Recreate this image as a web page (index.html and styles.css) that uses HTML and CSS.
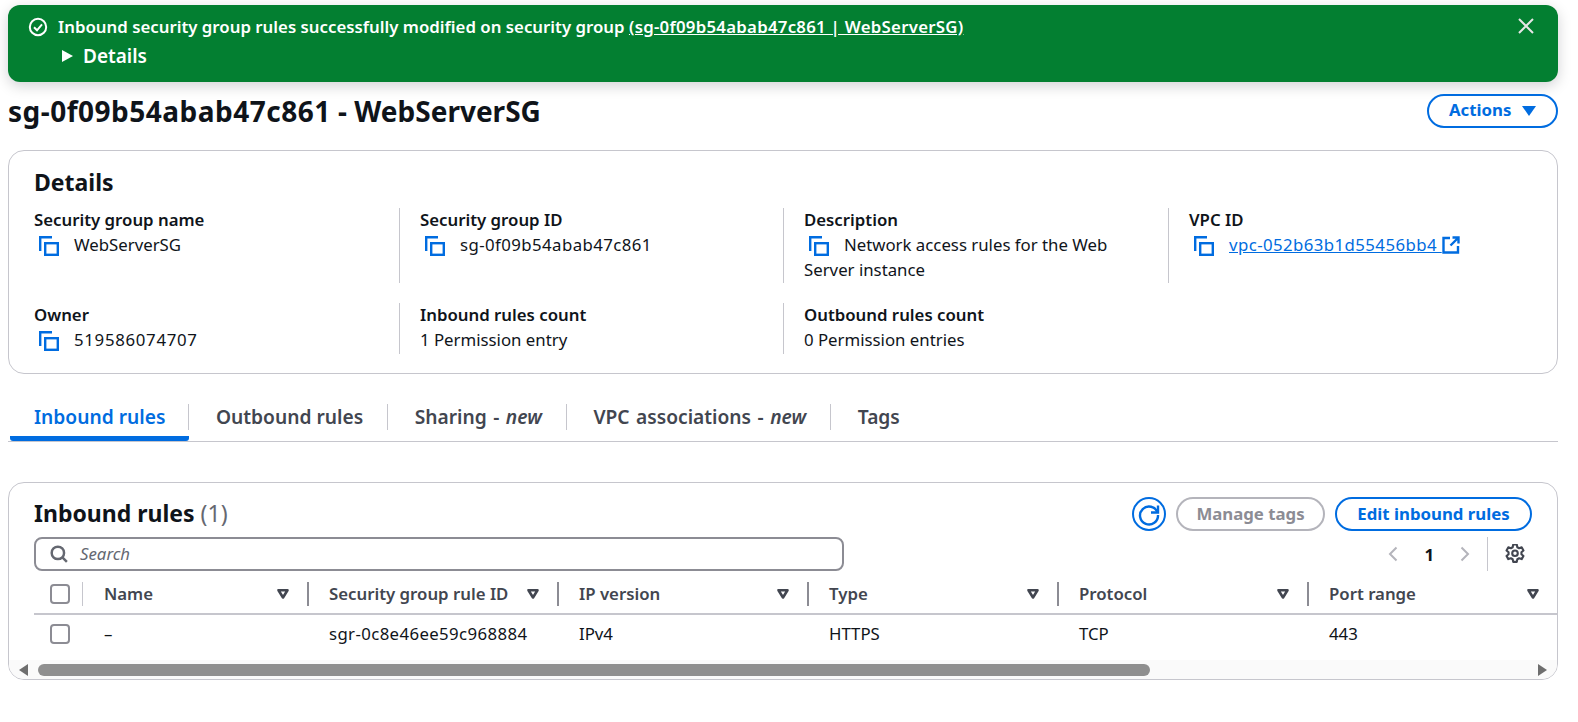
FILE: index.html
```html
<!DOCTYPE html>
<html>
<head>
    <meta charset="utf-8">
    <title>sg-0f09b54abab47c861 - WebServerSG</title>
    <link rel="stylesheet" href="styles.css">
</head>
<body>
<svg class="defs" width="0" height="0">
    <symbol id="copy" viewBox="0 0 20 20">
        <path d="M13 1.200H1.200V15" fill="none" stroke="#006ce0" stroke-width="2.400"/>
        <rect x="6.200" y="7.200" width="12.600" height="11.600" fill="none" stroke="#006ce0" stroke-width="2.400"/>
    </symbol>
    <symbol id="filter" viewBox="0 0 14 12">
        <path d="M2.500 2.200h9L7 9.500z" fill="none" stroke="#424650" stroke-width="2.600" stroke-linejoin="round"/>
    </symbol>
</svg>

<div class="flash">
    <svg class="flash-icon" viewBox="0 0 20 20"><circle cx="10" cy="10" r="8.200" fill="none" stroke="#fff" stroke-width="2"/><path d="M6 10.300l3 3 5-6" fill="none" stroke="#fff" stroke-width="2"/></svg>
    <div class="flash-body">
        <div class="flash-line flash-msg">Inbound security group rules successfully modified on security group <a href="#">(sg-0f09b54abab47c861 | WebServerSG)</a></div>
        <div class="flash-line flash-details"><span class="caret"></span>Details</div>
    </div>
    <svg class="flash-close" viewBox="0 0 16 16"><path d="M1 1l14 14M15 1L1 15" fill="none" stroke="#e6e6e6" stroke-width="2"/></svg>
</div>

<div class="page-head">
    <h1><span class="h1-id">sg-0f09b54abab47c861</span> - WebServerSG</h1>
    <button class="btn btn-actions">Actions <span class="btn-caret"></span></button>
</div>

<div class="card details">
    <h2>Details</h2>
    <div class="kv-grid">
        <div class="kv">
            <div class="kv-label">Security group name</div>
            <div><svg class="copy"><use href="#copy"/></svg>WebServerSG</div>
        </div>
        <div class="kv">
            <div class="kv-label">Security group ID</div>
            <div><svg class="copy"><use href="#copy"/></svg><span class="num">sg-0f09b54abab47c861</span></div>
        </div>
        <div class="kv">
            <div class="kv-label">Description</div>
            <div><svg class="copy"><use href="#copy"/></svg>Network access rules for the Web Server instance</div>
        </div>
        <div class="kv">
            <div class="kv-label">VPC ID</div>
            <div><svg class="copy"><use href="#copy"/></svg><a class="num" href="#">vpc-052b63b1d55456bb4 <svg class="ext" viewBox="0 0 18 18"><path d="M8 2H1.500v14.500H16V10M10.500 1.500h6v6M16 2L8.500 9.500" fill="none" stroke="#006ce0" stroke-width="2.400"/></svg></a></div>
        </div>
        <div class="kv">
            <div class="kv-label">Owner</div>
            <div><svg class="copy"><use href="#copy"/></svg><span class="num-wide">519586074707</span></div>
        </div>
        <div class="kv">
            <div class="kv-label">Inbound rules count</div>
            <div>1 Permission entry</div>
        </div>
        <div class="kv">
            <div class="kv-label">Outbound rules count</div>
            <div>0 Permission entries</div>
        </div>
    </div>
</div>

<div class="tabs">
    <div class="tab tab-active"><span>Inbound rules</span></div>
    <div class="tab"><span>Outbound rules</span></div>
    <div class="tab tab-new"><span>Sharing - <i>new</i></span></div>
    <div class="tab tab-new"><span>VPC associations - <i>new</i></span></div>
    <div class="tab"><span>Tags</span></div>
</div>

<div class="card rules">
    <div class="rules-head">
        <h2>Inbound rules <span class="count">(1)</span></h2>
        <div class="rules-actions">
            <button class="btn-round"><svg viewBox="0 0 24 24" width="24" height="24"><path d="M20.500 10.500A9 9 0 1 0 21 13" fill="none" stroke="#006ce0" stroke-width="2.400"/><path d="M21 3.500v7h-7" fill="none" stroke="#006ce0" stroke-width="2.400"/></svg></button>
            <button class="btn btn-disabled">Manage tags</button>
            <button class="btn btn-edit">Edit inbound rules</button>
        </div>
    </div>
    <div class="filter-row">
        <div class="search">
            <svg viewBox="0 0 16 16" width="18" height="18"><circle cx="7" cy="7" r="5.500" fill="none" stroke="#656871" stroke-width="2.200"/><path d="M11 11l4 4" stroke="#656871" stroke-width="2.200"/></svg>
            <span>Search</span>
        </div>
        <div class="pager">
            <svg viewBox="0 0 10 16" width="10" height="16"><path d="M8.500 1.500L2 8l6.500 6.500" fill="none" stroke="#b4b4bb" stroke-width="2"/></svg>
            <b>1</b>
            <svg viewBox="0 0 10 16" width="10" height="16"><path d="M1.500 1.500L8 8l-6.500 6.500" fill="none" stroke="#b4b4bb" stroke-width="2"/></svg>
        </div>
        <div class="prefs">
            <svg viewBox="1 1 18 18" width="20" height="20"><path d="M8.400 1.500h3.200l.5 2.400 1.600.9 2.300-.8 1.600 2.800-1.800 1.600v1.800l1.800 1.600-1.600 2.800-2.300-.8-1.600.9-.5 2.400H8.400l-.5-2.400-1.600-.9-2.300.8-1.600-2.800 1.800-1.600V8.400L2.400 6.800 4 4l2.300.8 1.600-.9z" fill="none" stroke="#424650" stroke-width="1.900" stroke-linejoin="round"/><circle cx="10" cy="9.300" r="2.500" fill="none" stroke="#424650" stroke-width="1.900"/></svg>
        </div>
    </div>
    <table class="grid">
        <thead>
            <tr>
                <th class="col-check"><span class="check"></span></th>
                <th class="col-name"><div class="th-in">Name<svg class="sort"><use href="#filter"/></svg></div></th>
                <th class="col-std"><div class="th-in">Security group rule ID<svg class="sort"><use href="#filter"/></svg></div></th>
                <th class="col-std"><div class="th-in">IP version<svg class="sort"><use href="#filter"/></svg></div></th>
                <th class="col-std"><div class="th-in">Type<svg class="sort"><use href="#filter"/></svg></div></th>
                <th class="col-std"><div class="th-in">Protocol<svg class="sort"><use href="#filter"/></svg></div></th>
                <th class="col-std"><div class="th-in">Port range<svg class="sort"><use href="#filter"/></svg></div></th>
            </tr>
        </thead>
        <tbody>
            <tr>
                <td class="col-check"><span class="check"></span></td>
                <td>–</td>
                <td><span class="num-tight">sgr-0c8e46ee59c968884</span></td>
                <td>IPv4</td>
                <td>HTTPS</td>
                <td>TCP</td>
                <td>443</td>
            </tr>
        </tbody>
    </table>
    <div class="scrollbar">
        <span class="arrow arrow-left"></span>
        <div class="thumb"></div>
        <span class="arrow arrow-right"></span>
    </div>
</div>
</body>
</html>
```

FILE: styles.css
```css
* {
    box-sizing: border-box;
}

body {
    margin: 0;
    padding: 5px 20px 0 8px;
    background: #fff;
    color: #0f141a;
    font-family: "Noto Sans", "Open Sans", sans-serif;
    font-size: 16.8px;
    line-height: 25px;
    overflow: hidden;
}

a {
    color: inherit;
}

.defs {
    position: absolute;
}

h1, h2 {
    margin: 0;
    font-weight: 700;
}

/* the id strings run wider than the rest of the text */
.num {
    letter-spacing: 0.42px;
}

.num-tight {
    letter-spacing: 0.38px;
}

.num-wide {
    letter-spacing: 0.7px;
}

/* flash bar */
.flash {
    display: flex;
    height: 77px;
    padding: 8px 24px 0 20px;
    border-radius: 12px;
    background: #037f31;
    color: #fff;
    font-weight: 600;
    box-shadow: 0 4px 14px rgba(0, 7, 22, 0.18);
}

.flash-icon {
    flex: none;
    width: 20px;
    height: 20px;
    margin: 4px 10px 0 0;
}

.flash-body {
    flex: 1;
}

.flash-line {
    height: 29px;
    line-height: 28px;
}

.flash-msg {
    letter-spacing: 0.01px;
}

.flash-msg a {
    letter-spacing: 0.27px;
}

.flash-details {
    display: flex;
    align-items: center;
    height: 28px;
    font-size: 19px;
}

.caret {
    width: 0;
    height: 0;
    margin: 0 10px 0 4px;
    border-left: 11px solid #fff;
    border-top: 6px solid transparent;
    border-bottom: 6px solid transparent;
}

.flash-close {
    flex: none;
    width: 16px;
    height: 16px;
    margin-top: 5px;
}

/* page header */
.page-head {
    display: flex;
    justify-content: space-between;
    align-items: center;
    height: 33px;
    margin: 12px 0 23px;
}

h1 {
    padding-top: 1px;
    font-size: 28px;
    line-height: 33px;
}

.h1-id {
    letter-spacing: 0.5px;
}

.btn {
    height: 34px;
    padding: 0 20px;
    border: 2px solid #006ce0;
    border-radius: 20px;
    background: #fff;
    color: #006ce0;
    font: 700 16.8px/24px "Noto Sans", "Open Sans", sans-serif;
}

.btn-actions {
    display: flex;
    align-items: center;
    width: 131px;
    gap: 11px;
    padding-bottom: 2px;
}

.btn-caret {
    width: 0;
    height: 0;
    margin-top: 2px;
    border-top: 10px solid #006ce0;
    border-left: 7px solid transparent;
    border-right: 7px solid transparent;
}

.btn-disabled {
    width: 149px;
    padding: 0;
    border-color: #b4b4bb;
    color: #8c8c94;
}

.btn-edit {
    width: 197px;
    padding: 0;
}

/* cards */
.card {
    border: 1px solid #c6c6cd;
    border-radius: 16px;
    background: #fff;
}

.details {
    height: 224px;
    padding: 17px 25px 0;
}

h2 {
    font-size: 23px;
    line-height: 29px;
}

.kv-grid {
    display: grid;
    grid-template-columns: 365px 384px 385px 365px;
    grid-template-rows: 75px 51px;
    row-gap: 20px;
    margin-top: 11px;
}

.kv {
    padding: 0 36px 0 20px;
    border-left: 1px solid #c6c6cd;
}

.kv:nth-child(1), .kv:nth-child(5) {
    padding-left: 0;
    border-left: 0;
}

.kv-label {
    font-weight: 600;
    line-height: 24px;
}

.copy {
    width: 20px;
    height: 20px;
    margin: 0 15px 0 5px;
    vertical-align: -5px;
}

.kv a {
    color: #006ce0;
}

.ext {
    width: 18px;
    height: 18px;
    vertical-align: -3px;
}

/* tabs */
.tabs {
    display: flex;
    height: 68px;
    padding: 0 0 0 2px;
    border-bottom: 1px solid #c6c6cd;
}

.tab {
    height: 67px;
    padding-top: 30px;
    color: #424650;
    font-size: 19.2px;
    font-weight: 600;
    border-bottom: 5px solid transparent;
}

.tab span {
    display: block;
    padding: 0 24px 0 26.6px;
    line-height: 26px;
    border-right: 1px solid #c6c6cd;
}

.tab-new {
    word-spacing: 1.5px;
}

.tab:last-child span {
    border-right: 0;
}

.tab-active {
    color: #006ce0;
    border-bottom-color: #006ce0;
    border-radius: 3px;
}

.tab-active span {
    padding: 0 23px 0 24px;
}

/* rules table */
.rules {
    height: 198px;
    margin-top: 40px;
    overflow: hidden;
}

.rules-head {
    display: flex;
    justify-content: space-between;
    align-items: center;
    height: 34px;
    margin-top: 14px;
    padding: 0 25px;
}

.rules-head h2 {
    margin-top: -2px;
}

.count {
    color: #656871;
    font-weight: 400;
}

.rules-actions {
    display: flex;
    align-items: center;
    gap: 10px;
}

.btn-round {
    display: flex;
    justify-content: center;
    align-items: center;
    width: 34px;
    height: 34px;
    padding: 0;
    border: 2px solid #006ce0;
    border-radius: 50%;
    background: #fff;
}

.filter-row {
    display: flex;
    align-items: center;
    height: 34px;
    margin: 6px 0 3px;
    padding-left: 25px;
}

.search {
    display: flex;
    align-items: center;
    gap: 12px;
    width: 810px;
    height: 34px;
    padding-left: 14px;
    border: 2px solid #8c8c94;
    border-radius: 8px;
    color: #656871;
    font-style: italic;
}

.search span {
    margin-top: -1px;
}

.pager {
    display: flex;
    align-items: center;
    gap: 26px;
    margin-left: auto;
}

.prefs {
    display: flex;
    align-items: center;
    width: 70px;
    height: 34px;
    margin-left: 17px;
    padding-left: 17px;
    border-left: 1px solid #c6c6cd;
}

.grid {
    width: 1523px;
    margin-left: 25px;
    border-collapse: collapse;
    table-layout: fixed;
}

.grid th {
    height: 40px;
    padding: 0;
    border-bottom: 2px solid #c6c6cd;
    color: #424650;
    font-weight: 600;
    text-align: left;
}

.grid .col-check {
    width: 48px;
    padding: 0 0 0 16px;
}

.grid .col-name {
    width: 225px;
}

.grid .col-std {
    width: 250px;
}

.th-in {
    display: flex;
    justify-content: space-between;
    align-items: center;
    height: 24px;
    padding: 0 17px 0 20px;
    border-left: 2px solid #8c8c94;
}

.col-name .th-in {
    padding-left: 21px;
    border-left: 1px solid #c6c6cd;
}

.sort {
    flex: none;
    width: 14px;
    height: 12px;
}

.grid td {
    height: 38px;
    padding: 0 0 0 22px;
}

.check {
    display: block;
    width: 20px;
    height: 20px;
    border: 2px solid #8c8c94;
    border-radius: 4px;
}

.scrollbar {
    display: flex;
    align-items: center;
    height: 19px;
    margin-top: 8px;
    padding: 0 10px 0 10px;
    background: #fafafa;
}

.arrow {
    width: 0;
    height: 0;
    border-top: 6px solid transparent;
    border-bottom: 6px solid transparent;
}

.arrow-left {
    border-right: 9px solid #6e6e6e;
}

.arrow-right {
    margin-left: auto;
    border-left: 9px solid #6e6e6e;
}

.thumb {
    width: 1112px;
    height: 12px;
    margin-left: 10px;
    border-radius: 6px;
    background: #8f8f8f;
}
```
